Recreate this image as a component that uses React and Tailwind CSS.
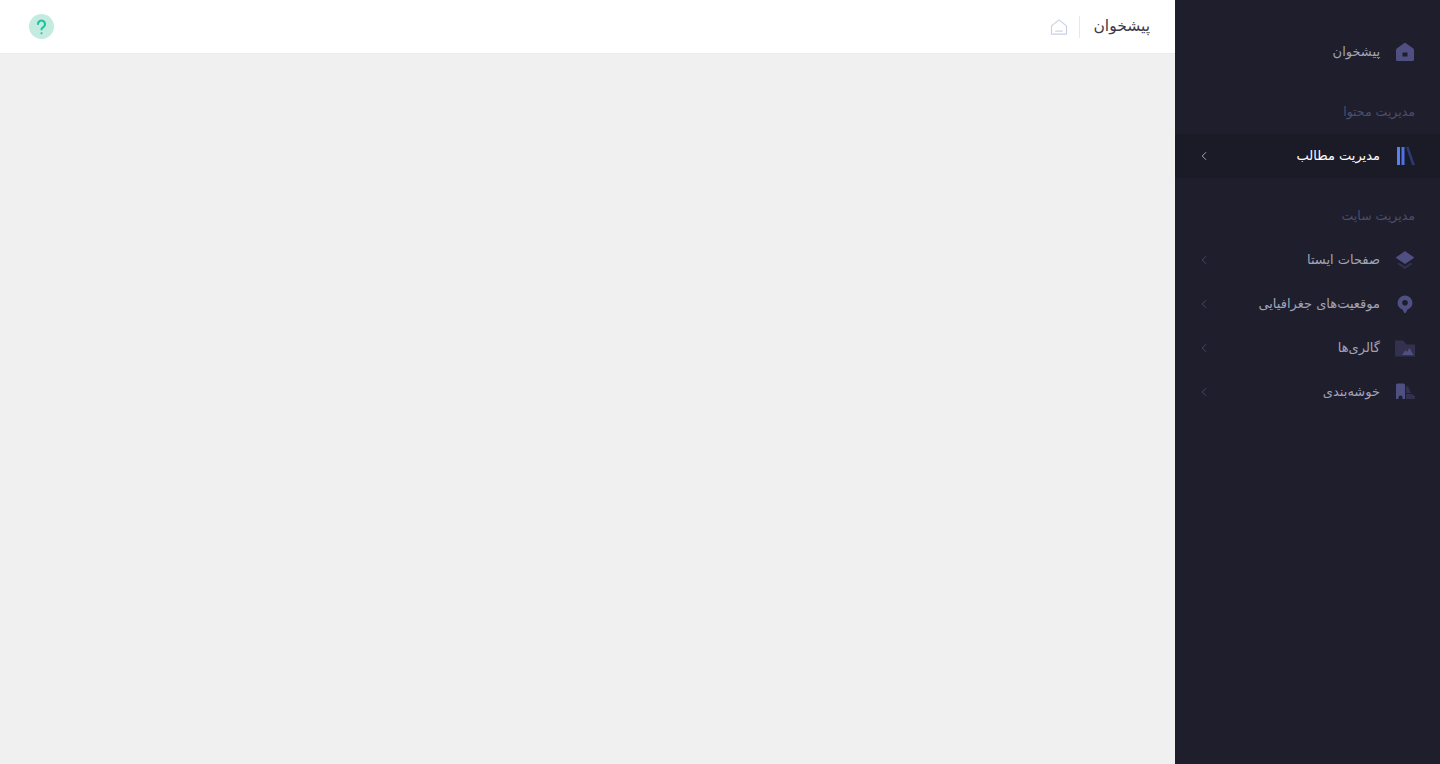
import React from 'react';
import { ChevronLeft } from 'lucide-react';

const HomeIcon = () => (
    <svg width="24" height="24" viewBox="0 0 24 24" fill="none">
        <path fillRule="evenodd" clipRule="evenodd" d="M4 8.300 11 3.200a1.700 1.700 0 0 1 2 0l7 5.100c.6.400 1 1 1 1.800v9.400a1.500 1.500 0 0 1-1.500 1.500h-15A1.500 1.500 0 0 1 3 19.500v-9.400c0-.8.400-1.400 1-1.800ZM9.500 12.500h5v4h-5v-4Z" fill="#4f4f82" />
    </svg>
);

const BooksIcon = () => (
    <svg width="24" height="24" viewBox="0 0 24 24" fill="none">
        <rect x="4" y="3" width="3" height="18" fill="#5a7ff0" />
        <rect x="8.500" y="3" width="3" height="18" fill="#4f72e6" />
        <path d="M13 3h2.600L22 21h-3L13 3Z" fill="#2b3a70" />
    </svg>
);

const LayersIcon = () => (
    <svg width="24" height="24" viewBox="0 0 24 24" fill="none">
        <path d="M12 16 3.500 10.300a.7.700 0 0 1 0-1.200L12 3l8.500 6.100a.7.700 0 0 1 0 1.200L12 16Z" fill="#4f4f82" />
        <path d="M12 21 4.500 16l1.600-1.200L12 18.500l5.900-3.700 1.600 1.200L12 21Z" fill="#32324f" />
    </svg>
);

const PinIcon = () => (
    <svg width="24" height="24" viewBox="0 0 24 24" fill="none">
        <path fillRule="evenodd" clipRule="evenodd" d="M12 21c-.4 0-.8-.2-1-.6l-1.500-2.800C6.700 16.500 4.500 14 4.500 11a7.500 7.500 0 0 1 15 0c0 3-2.200 5.500-5 6.600L13 20.400c-.2.400-.6.600-1 .6ZM12 13.500a2.800 2.800 0 1 0 0-5.600 2.800 2.800 0 0 0 0 5.600Z" fill="#4f4f82" />
    </svg>
);

const GalleryIcon = () => (
    <svg width="24" height="24" viewBox="0 0 24 24" fill="none">
        <path d="M2 4.500h8l3.500 4H22v12H2v-16Z" fill="#32324f" />
        <path d="M9 19 12.500 14l1.500 2 2.500-4 4 7H9Z" fill="#4f4f82" />
    </svg>
);

const ClusterIcon = () => (
    <svg width="24" height="24" viewBox="0 0 24 24" fill="none">
        <path d="M3 5a1.500 1.500 0 0 1 1.500-1.500h6A1.500 1.500 0 0 1 12 5v14H9.500v-1.500a2 2 0 0 0-4 0V19H3V5Z" fill="#4f4f82" />
        <path d="M13 6.500h2l3 6.500h-5V6.500Z" fill="#32324f" />
        <path d="M13 14h6l3 2.500V19h-9v-5Z" fill="#32324f" />
    </svg>
);

const SectionTitle = ({ title }) => (
    <div className="h-11 flex items-center justify-end px-[25px] text-[12.5px] text-[#4c4e6f] whitespace-nowrap">
        <span dir="rtl">{title}</span>
    </div>
);

const MenuItem = ({ title, icon, active, arrow = true }) => (
    <div className={`h-11 flex items-center pl-[22px] pr-[23px] ${active ? 'bg-[#1b1b28]' : ''}`}>
        {arrow && <ChevronLeft size={14} strokeWidth={1.5} className={active ? 'text-[#b5b5c3]' : 'text-[#4c4e6f]'} />}
        <span dir="rtl" className={`ml-auto text-[13px] whitespace-nowrap ${active ? 'text-white' : 'text-[#a2a3b7]'}`}>
            {title}
        </span>
        <div className="ml-[13px] w-6 shrink-0 flex items-center justify-center">{icon}</div>
    </div>
);

const App = () => {
    return (
        <div className="flex h-[764px] overflow-hidden bg-[#f0f0f1] font-['DejaVu_Sans','Noto_Sans',sans-serif]">
            <main className="flex-1 min-w-0">
                <header className="h-[54px] bg-white border-b border-[#ecedf3] flex items-center pl-[29px] pr-[25px]">
                    <div className="w-[25px] h-[25px] rounded-full bg-[#c3ebdf] flex items-center justify-center">
                        <svg width="17" height="17" viewBox="0 0 24 24" fill="none" stroke="#1bc5a0" strokeWidth="3" strokeLinecap="round">
                            <path d="M7 8.500a5 5 0 1 1 7.600 4.300c-1.700 1-2.600 1.800-2.600 3.200" />
                            <path d="M12 21.500v.01" />
                        </svg>
                    </div>
                    <svg className="ml-auto" width="18" height="18" viewBox="0 0 24 24" fill="none" stroke="#c9cfe8" strokeWidth="1.500">
                        <path d="M2 10.500 12 2.500l10 8v11H2v-11Z" strokeLinejoin="round" />
                        <path d="M7 17.500h10" />
                    </svg>
                    <div className="w-px h-[22px] bg-[#e5e7ef] ml-[11px] mr-[13px]" />
                    <h1 dir="rtl" className="text-[15.500px] text-[#3a3a4a] whitespace-nowrap">پیشخوان</h1>
                </header>
            </main>
            <aside className="w-[265px] shrink-0 bg-[#1e1e2d] pt-[30px]">
                <MenuItem title="پیشخوان" icon={<HomeIcon />} arrow={false} />
                <div className="h-4" />
                <SectionTitle title="مدیریت محتوا" />
                <MenuItem title="مدیریت مطالب" icon={<BooksIcon />} active />
                <div className="h-4" />
                <SectionTitle title="مدیریت سایت" />
                <MenuItem title="صفحات ایستا" icon={<LayersIcon />} />
                <MenuItem title="موقعیت‌های جغرافیایی" icon={<PinIcon />} />
                <MenuItem title="گالری‌ها" icon={<GalleryIcon />} />
                <MenuItem title="خوشه‌بندی" icon={<ClusterIcon />} />
            </aside>
        </div>
    );
};

export default App;
